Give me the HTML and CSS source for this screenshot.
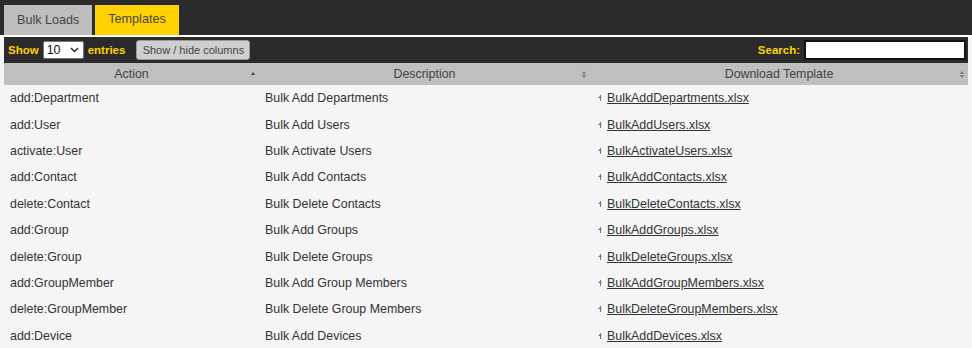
FILE: index.html
```html
<!DOCTYPE html>
<html lang="en">
  <head>
    <meta charset="utf-8">
    <title>Templates</title>
    <link rel="stylesheet" href="styles.css">
  </head>
  <body>
    <div class="tabs">
      <div class="tabs__item">Bulk Loads</div>
      <div class="tabs__item tabs__item--active">Templates</div>
    </div>
    <div class="panel">
      <div class="toolbar">
        <div class="toolbar__length">
          <span class="toolbar__label">Show</span>
          <div class="select">10
            <svg class="select__caret" width="9" height="6" viewBox="0 0 9 6"><path d="M1 1l3.5 3.5L8 1" fill="none" stroke="#222" stroke-width="1.4"/></svg>
          </div>
          <span class="toolbar__label">entries</span>
          <button class="toolbar__btn">Show / hide columns</button>
        </div>
        <div class="toolbar__search">
          <span class="toolbar__label">Search:</span>
          <div class="search"></div>
        </div>
      </div>
      <table class="grid">
        <thead>
          <tr>
            <th class="grid__action">Action<span class="sort sort--asc"></span></th>
            <th class="grid__desc">Description<span class="sort sort--both"></span></th>
            <th>Download Template<span class="sort sort--both"></span></th>
          </tr>
        </thead>
        <tbody>
          <tr><td>add:Department</td><td>Bulk Add Departments</td><td><span class="dl"></span><a href="#">BulkAddDepartments.xlsx</a></td></tr>
          <tr><td>add:User</td><td>Bulk Add Users</td><td><span class="dl"></span><a href="#">BulkAddUsers.xlsx</a></td></tr>
          <tr><td>activate:User</td><td>Bulk Activate Users</td><td><span class="dl"></span><a href="#">BulkActivateUsers.xlsx</a></td></tr>
          <tr><td>add:Contact</td><td>Bulk Add Contacts</td><td><span class="dl"></span><a href="#">BulkAddContacts.xlsx</a></td></tr>
          <tr><td>delete:Contact</td><td>Bulk Delete Contacts</td><td><span class="dl"></span><a href="#">BulkDeleteContacts.xlsx</a></td></tr>
          <tr><td>add:Group</td><td>Bulk Add Groups</td><td><span class="dl"></span><a href="#">BulkAddGroups.xlsx</a></td></tr>
          <tr><td>delete:Group</td><td>Bulk Delete Groups</td><td><span class="dl"></span><a href="#">BulkDeleteGroups.xlsx</a></td></tr>
          <tr><td>add:GroupMember</td><td>Bulk Add Group Members</td><td><span class="dl"></span><a href="#">BulkAddGroupMembers.xlsx</a></td></tr>
          <tr><td>delete:GroupMember</td><td>Bulk Delete Group Members</td><td><span class="dl"></span><a href="#">BulkDeleteGroupMembers.xlsx</a></td></tr>
          <tr><td>add:Device</td><td>Bulk Add Devices</td><td><span class="dl"></span><a href="#">BulkAddDevices.xlsx</a></td></tr>
        </tbody>
      </table>
    </div>
  </body>
</html>
```

FILE: styles.css
```css
* {
  margin: 0;
  padding: 0;
  box-sizing: border-box;
}
body {
  background-color: #f5f5f5;
  font-family: "Liberation Sans", Arial, sans-serif;
  font-size: 12.4px;
  color: #333;
}
.tabs {
  display: flex;
  align-items: flex-end;
  gap: 3px;
  height: 37px;
  padding-left: 4px;
  background-color: #2b2b2b;
  border-bottom: 2px solid #fff;
}
.tabs__item {
  height: 30px;
  padding: 0 13px;
  line-height: 30px;
  font-size: 12.6px;
  color: #444;
  background-color: #bdbdbd;
}
.tabs__item--active {
  height: 31px;
  line-height: 29px;
  background-color: #ffd200;
  border-top: 1px solid #1a2340;
}
.panel {
  margin: 0 4px;
}
.toolbar {
  display: flex;
  justify-content: space-between;
  align-items: center;
  height: 26px;
  padding: 0 2px 0 4px;
  background-color: #2b2b2b;
}
.toolbar__length, .toolbar__search {
  display: flex;
  align-items: center;
  gap: 4px;
}
.toolbar__label {
  color: #ffd200;
  font-weight: bold;
  font-size: 11.5px;
}
.select {
  display: flex;
  align-items: center;
  justify-content: space-between;
  width: 41px;
  height: 18px;
  padding: 0 4px 0 3px;
  background-color: #fff;
  border: 1px solid #777;
  border-radius: 2px;
  font-size: 12.5px;
  color: #111;
}
.toolbar__btn {
  margin-left: 7px;
  width: 114px;
  height: 20px;
  font-family: inherit;
  font-size: 11px;
  color: #444;
  background-color: #cfcfcf;
  border: 1px solid #999;
  border-radius: 3px;
}
.search {
  width: 162px;
  height: 20px;
  background-color: #fff;
  border: 2px solid #111;
}
.grid {
  width: 100%;
  border-collapse: collapse;
  table-layout: fixed;
}
.grid th {
  position: relative;
  height: 22px;
  font-weight: normal;
  font-size: 12.4px;
  color: #444;
  background-color: #bfbfbf;
}
.grid__action {
  width: 255px;
}
.grid__desc {
  width: 331px;
}
.grid td {
  height: 26.4px;
  padding-left: 6px;
  white-space: nowrap;
}
.grid td a {
  color: #333;
}
.sort {
  position: absolute;
  right: 3px;
  top: 8px;
  width: 6px;
  height: 8px;
}
.sort--asc::before {
  content: '';
  position: absolute;
  top: 1px;
  left: 1px;
  border: 2.5px solid transparent;
  border-bottom: 3px solid #444;
  border-top: 0;
}
.sort--both::before, .sort--both::after {
  content: '';
  position: absolute;
  left: 1px;
  border: 2.5px solid transparent;
}
.sort--both::before {
  top: 0;
  border-bottom: 3px solid #777;
  border-top: 0;
}
.sort--both::after {
  top: 4px;
  border-top: 3px solid #777;
  border-bottom: 0;
}
.dl {
  display: inline-block;
  position: relative;
  width: 5px;
  height: 6px;
  margin: 0 4px 0 2px;
  vertical-align: 1px;
}
.dl::before {
  content: '';
  position: absolute;
  left: 2px;
  top: 0;
  width: 1px;
  height: 6px;
  background-color: #777;
}
.dl::after {
  content: '';
  position: absolute;
  left: 0;
  top: 1px;
  border: 2.5px solid transparent;
  border-bottom: 2px solid #777;
  border-top: 0;
}
```
